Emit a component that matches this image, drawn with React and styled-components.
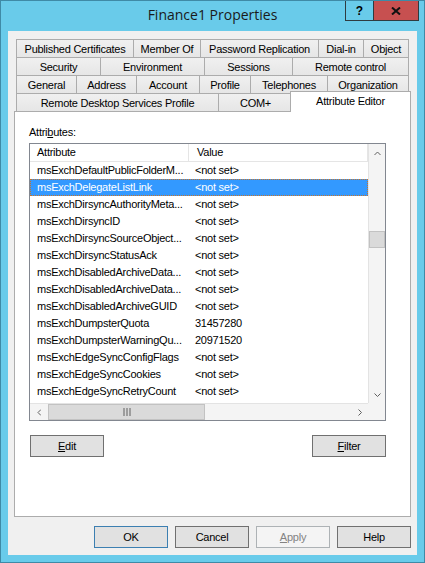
import React from 'react'
import styled, { css, createGlobalStyle } from 'styled-components'

const GlobalStyle = createGlobalStyle`
  html, body {
    margin: 0;
    padding: 0;
    background: #69cbea;
  }
  * { box-sizing: border-box; }
`

const Window = styled.div`
  width: 425px;
  height: 563px;
  background: #69cbea;
  border: 1px solid #3f8aa6;
  display: flex;
  flex-direction: column;
  font-family: "Liberation Sans", Arial, sans-serif;
  font-size: 11px;
  letter-spacing: -0.25px;
  color: #000;
`

const TitleBar = styled.div`
  height: 30px;
  display: grid;
  grid-template-columns: 1fr auto 1fr;
  align-items: start;
`

const Title = styled.div`
  grid-column: 2;
  font-family: "Open Sans", "Noto Sans", sans-serif;
  font-size: 14px;
  letter-spacing: 0;
  line-height: 28px;
  color: #1a1a1a;
`

const CaptionButtons = styled.div`
  grid-column: 3;
  display: flex;
  justify-content: flex-end;
  padding-right: 5px;
`

const CaptionButton = styled.div`
  height: 20px;
  width: ${p => (p.$close ? 46 : 29)}px;
  margin-left: ${p => (p.$close ? -1 : 0)}px;
  border: 1px solid #2f3b40;
  border-top: none;
  background: ${p => (p.$close ? '#c75050' : 'transparent')};
  display: flex;
  align-items: center;
  justify-content: center;
  font-weight: bold;
  font-size: 12px;
  letter-spacing: 0;
`

const Client = styled.div`
  flex: 1;
  margin: 0 7px 7px;
  background: #f0f0f0;
  padding: 8px 6px 7px;
  display: flex;
  flex-direction: column;
`

const TabStrip = styled.div`
  margin: 0 2px;
  display: flex;
  flex-direction: column;
`

const TabRow = styled.div`
  display: flex;
  height: 18px;
`

const Tab = styled.div`
  flex: ${p => (p.$w ? `0 0 ${p.$w}px` : '1 1 auto')};
  height: 18px;
  border: 1px solid #acacac;
  border-bottom: none;
  border-right: none;
  &:last-child { border-right: 1px solid #acacac; }
  background: linear-gradient(#f0f0f0, #e6e6e6);
  display: flex;
  align-items: center;
  justify-content: center;
  padding-top: 1px;
  white-space: nowrap;

  ${p => p.$active && css`
    background: #fff;
    height: 21px;
    margin: -2px -2px 0 -2px;
    padding-top: 0;
    padding-bottom: 3px;
    position: relative;
    z-index: 1;
  `}
`

const Panel = styled.div`
  flex: 1;
  background: #fff;
  border: 1px solid #acacac;
  padding: 14px 0 0 14px;
`

const FieldLabel = styled.div`
  height: 13px;
  line-height: 13px;
  margin-bottom: 4px;
`

const ListBox = styled.div`
  width: 357px;
  height: 278px;
  border: 1px solid #828790;
  background: #fff;
  display: grid;
  grid-template-columns: 1fr 17px;
  grid-template-rows: 1fr 17px;
`

const ListContent = styled.div`
  overflow: hidden;
`

const HeaderRow = styled.div`
  display: flex;
  height: 18px;
  border-bottom: 1px solid #e5e5e5;
`

const HeaderCell = styled.div`
  flex: ${p => (p.$w ? `0 0 ${p.$w}px` : '1 1 auto')};
  border-right: 1px solid #e5e5e5;
  padding-left: ${p => p.$pad}px;
  line-height: 17px;
`

const Row = styled.div`
  display: flex;
  height: 17px;
  line-height: 17px;
  ${p => p.$selected && css`
    background: #3399ff;
    color: #fff;
    outline: 1px dotted #c8742a;
    outline-offset: -1px;
  `}
`

const Cell = styled.div`
  flex: ${p => (p.$w ? `0 0 ${p.$w}px` : '1 1 auto')};
  padding-left: ${p => p.$pad}px;
  white-space: nowrap;
  overflow: hidden;
`

const VScroll = styled.div`
  background: #f4f4f4;
  border-left: 1px solid #e3e3e3;
  display: flex;
  flex-direction: column;
`

const HScroll = styled.div`
  background: #f4f4f4;
  border-top: 1px solid #e3e3e3;
  display: flex;
`

const ArrowBtn = styled.div`
  flex: 0 0 17px;
  display: flex;
  align-items: center;
  justify-content: center;
`

const Track = styled.div`
  flex: 1;
  display: flex;
  flex-direction: ${p => (p.$vertical ? 'column' : 'row')};
`

const Thumb = styled.div`
  background: #dadada;
  border: 1px solid #c2c2c2;
  display: flex;
  align-items: center;
  justify-content: center;
  ${p => p.$vertical
    ? css`height: 17px; margin-top: 70px;`
    : css`width: 157px; margin-left: 1px;`}
`

const Corner = styled.div`
  background: #f4f4f4;
`

const ActionRow = styled.div`
  width: 357px;
  display: flex;
  justify-content: space-between;
  padding-left: 1px;
  margin-top: 14px;
`

const Button = styled.button`
  width: 74px;
  height: 22px;
  padding: 0;
  font: inherit;
  letter-spacing: inherit;
  color: #000;
  background: #e1e1e1;
  border: 1px solid ${p => (p.$default ? '#3c7fb1' : '#707070')};
  &:disabled {
    background: #f4f4f4;
    border-color: #adb2b5;
    color: #838383;
  }
`

const Footer = styled.div`
  display: flex;
  justify-content: flex-end;
  gap: 7px;
  margin-top: 9px;
`

const chevrons = {
  up: { w: 7, h: 4, pts: '0.5,4 3.5,1 6.5,4' },
  down: { w: 7, h: 4, pts: '0.5,0.5 3.5,3.5 6.5,0.5' },
  left: { w: 4, h: 7, pts: '4,0.5 1,3.5 4,6.5' },
  right: { w: 4, h: 7, pts: '0.5,0.5 3.5,3.5 0.5,6.5' }
}

const Chevron = ({ dir }) => {
  const c = chevrons[dir]
  return (
    <svg width={c.w} height={c.h} viewBox={`0 0 ${c.w} ${c.h}`}>
      <polyline points={c.pts} fill="none" stroke="#606060" strokeWidth="1" />
    </svg>
  )
}

const Grip = () => (
  <svg width="8" height="8" viewBox="0 0 8 8">
    <rect x="0.5" y="0" width="1" height="8" fill="#606060" />
    <rect x="3.5" y="0" width="1" height="8" fill="#606060" />
    <rect x="6.5" y="0" width="1" height="8" fill="#606060" />
  </svg>
)

const CloseGlyph = () => (
  <svg width="10" height="8" viewBox="0 0 10 8">
    <path d="M1 0.5 L9 7.5 M9 0.5 L1 7.5" stroke="#111" strokeWidth="2" />
  </svg>
)

const tabRows = [
  [['Published Certificates', 117], ['Member Of', 67], ['Password Replication', 118], ['Dial-in', 45], ['Object']],
  [['Security', 84], ['Environment', 104], ['Sessions', 88], ['Remote control']],
  [['General', 60], ['Address', 60], ['Account', 63], ['Profile', 51], ['Telephones', 77], ['Organization']],
  [['Remote Desktop Services Profile', 202], ['COM+', 74], ['Attribute Editor', null, true]]
]

const attributes = [
  ['msExchDefaultPublicFolderM...', '<not set>'],
  ['msExchDelegateListLink', '<not set>'],
  ['msExchDirsyncAuthorityMeta...', '<not set>'],
  ['msExchDirsyncID', '<not set>'],
  ['msExchDirsyncSourceObject...', '<not set>'],
  ['msExchDirsyncStatusAck', '<not set>'],
  ['msExchDisabledArchiveData...', '<not set>'],
  ['msExchDisabledArchiveData...', '<not set>'],
  ['msExchDisabledArchiveGUID', '<not set>'],
  ['msExchDumpsterQuota', '31457280'],
  ['msExchDumpsterWarningQu...', '20971520'],
  ['msExchEdgeSyncConfigFlags', '<not set>'],
  ['msExchEdgeSyncCookies', '<not set>'],
  ['msExchEdgeSyncRetryCount', '<not set>']
]

const App = () => {
  return (
    <>
      <GlobalStyle />
      <Window>
        <TitleBar>
          <Title>Finance1 Properties</Title>
          <CaptionButtons>
            <CaptionButton>?</CaptionButton>
            <CaptionButton $close><CloseGlyph /></CaptionButton>
          </CaptionButtons>
        </TitleBar>

        <Client>
          <TabStrip>
            {tabRows.map((row, i) => (
              <TabRow key={i}>
                {row.map(([label, w, active]) => (
                  <Tab key={label} $w={w} $active={active}>{label}</Tab>
                ))}
              </TabRow>
            ))}
          </TabStrip>

          <Panel>
            <FieldLabel>Attri<u>b</u>utes:</FieldLabel>
            <ListBox>
              <ListContent>
                <HeaderRow>
                  <HeaderCell $w={159} $pad={7}>Attribute</HeaderCell>
                  <HeaderCell $pad={8}>Value</HeaderCell>
                </HeaderRow>
                {attributes.map(([name, value], i) => (
                  <Row key={i} $selected={i === 1}>
                    <Cell $w={159} $pad={7}>{name}</Cell>
                    <Cell $pad={6}>{value}</Cell>
                  </Row>
                ))}
              </ListContent>
              <VScroll>
                <ArrowBtn><Chevron dir="up" /></ArrowBtn>
                <Track $vertical>
                  <Thumb $vertical />
                </Track>
                <ArrowBtn><Chevron dir="down" /></ArrowBtn>
              </VScroll>
              <HScroll>
                <ArrowBtn><Chevron dir="left" /></ArrowBtn>
                <Track>
                  <Thumb><Grip /></Thumb>
                </Track>
                <ArrowBtn><Chevron dir="right" /></ArrowBtn>
              </HScroll>
              <Corner />
            </ListBox>
            <ActionRow>
              <Button><u>E</u>dit</Button>
              <Button><u>F</u>ilter</Button>
            </ActionRow>
          </Panel>

          <Footer>
            <Button $default>OK</Button>
            <Button>Cancel</Button>
            <Button disabled><u>A</u>pply</Button>
            <Button>Help</Button>
          </Footer>
        </Client>
      </Window>
    </>
  )
}

export default App
